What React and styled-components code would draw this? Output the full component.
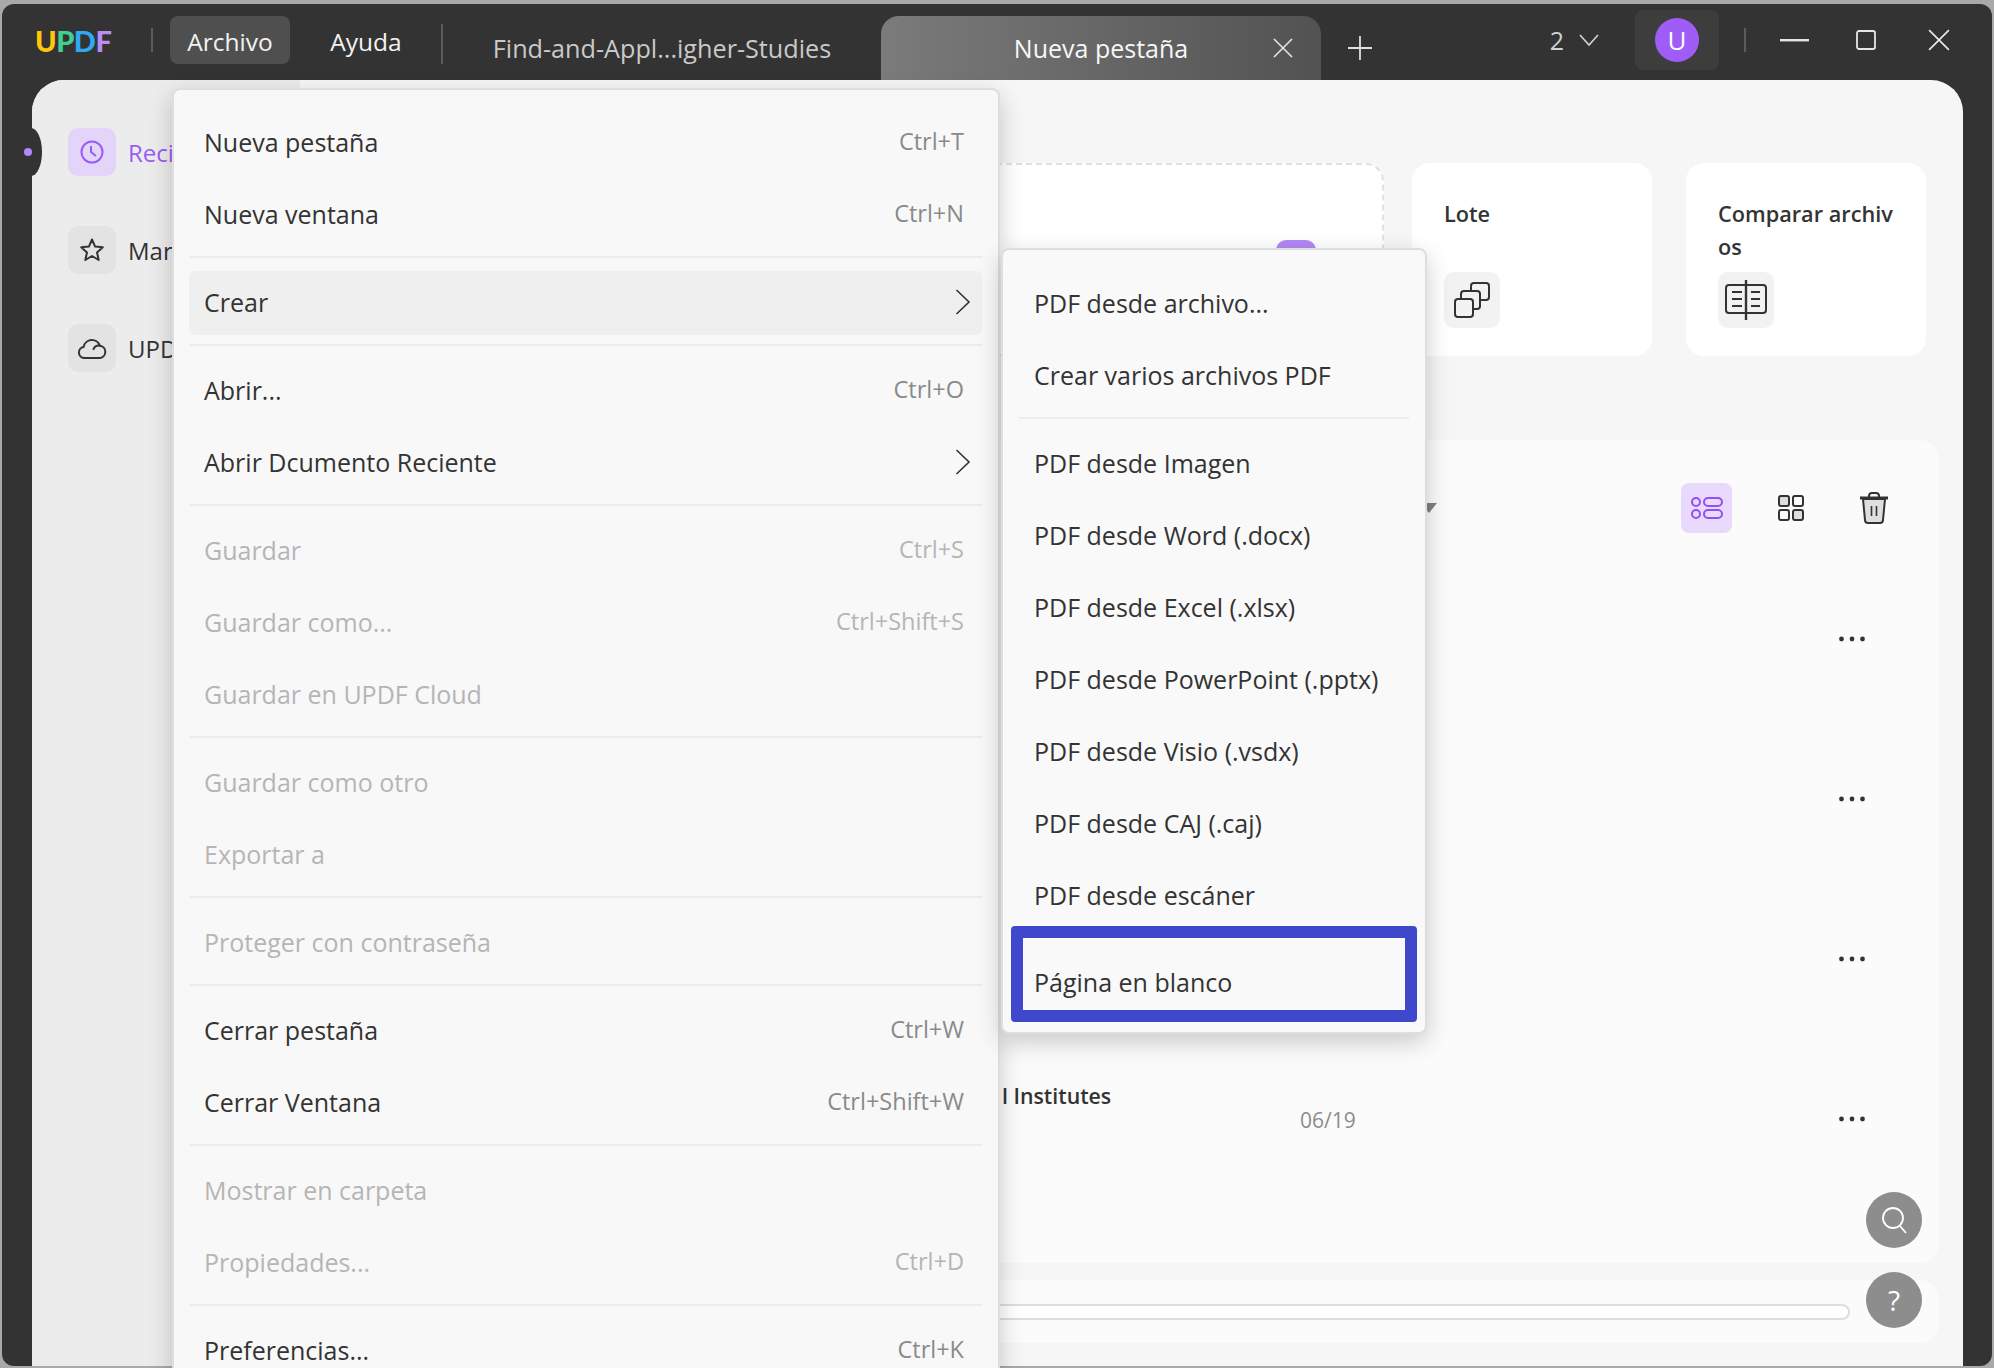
import React from "react";
import styled, { createGlobalStyle } from "styled-components";

const mainMenu = [
  [{ label: "Nueva pestaña", keys: "Ctrl+T" }, { label: "Nueva ventana", keys: "Ctrl+N" }],
  [{ label: "Crear", arrow: true, hover: true }],
  [{ label: "Abrir...", keys: "Ctrl+O" }, { label: "Abrir Dcumento Reciente", arrow: true }],
  [
    { label: "Guardar", keys: "Ctrl+S", off: true },
    { label: "Guardar como...", keys: "Ctrl+Shift+S", off: true },
    { label: "Guardar en UPDF Cloud", off: true },
  ],
  [{ label: "Guardar como otro", off: true }, { label: "Exportar a", off: true }],
  [{ label: "Proteger con contraseña", off: true }],
  [{ label: "Cerrar pestaña", keys: "Ctrl+W" }, { label: "Cerrar Ventana", keys: "Ctrl+Shift+W" }],
  [{ label: "Mostrar en carpeta", off: true }, { label: "Propiedades...", keys: "Ctrl+D", off: true }],
  [{ label: "Preferencias...", keys: "Ctrl+K" }],
];

const createItems = [
  "PDF desde Imagen",
  "PDF desde Word (.docx)",
  "PDF desde Excel (.xlsx)",
  "PDF desde PowerPoint (.pptx)",
  "PDF desde Visio (.vsdx)",
  "PDF desde CAJ (.caj)",
  "PDF desde escáner",
];

const Dots = () => (
  <svg width="28" height="6" viewBox="0 0 28 6" fill="#333">
    <circle cx="3.5" cy="3" r="2.4" />
    <circle cx="14" cy="3" r="2.4" />
    <circle cx="24.5" cy="3" r="2.4" />
  </svg>
);

const Chevron = () => (
  <svg width="16" height="26" viewBox="0 0 16 26" fill="none" stroke="#333" strokeWidth="1.6">
    <path d="M1.5 1 L14 13 L1.5 25" />
  </svg>
);

const Cross = ({ size = 20, color = "#e6e6e6" }) => (
  <svg width={size} height={size} viewBox="0 0 20 20" fill="none" stroke={color} strokeWidth="1.6">
    <path d="M1 1 L19 19 M19 1 L1 19" />
  </svg>
);

const App = () => {
  return (
    <Stage>
      <GlobalStyle />
      <Window>
        <TitleBar>
          <MenuGroup>
            <Logo>
              <LogoLetter $color="#ffc60a">U</LogoLetter>
              <LogoLetter $color="#3ed08f">P</LogoLetter>
              <LogoLetter $color="#2ea9f2">D</LogoLetter>
              <LogoLetter $color="#b98cf6">F</LogoLetter>
            </Logo>
            <BarDivider $ml={42} $h={24} />
            <MenuButton $ml={17} $active>Archivo</MenuButton>
            <MenuButton $ml={16}>Ayuda</MenuButton>
            <BarDivider $ml={15} $h={40} $mt={8} />
          </MenuGroup>
          <Tabs>
            <Tab>Find-and-Appl...igher-Studies</Tab>
            <ActiveTab>
              Nueva pestaña
              <TabClose><Cross /></TabClose>
            </ActiveTab>
            <AddTab>
              <svg width="24" height="24" viewBox="0 0 24 24" fill="none" stroke="#e0e0e0" strokeWidth="1.8">
                <path d="M12 0 V24 M0 12 H24" />
              </svg>
            </AddTab>
          </Tabs>
          <Controls>
            <PageCount>
              2
              <svg width="20" height="12" viewBox="0 0 20 12" fill="none" stroke="#d0d0d0" strokeWidth="1.7">
                <path d="M1 1 L10 11 L19 1" />
              </svg>
            </PageCount>
            <AvatarSlot><Avatar>U</Avatar></AvatarSlot>
            <BarDivider $ml={25} $h={24} />
            <WinButton $ml={34}>
              <svg width="29" height="3" viewBox="0 0 29 3"><rect width="29" height="2.4" fill="#e6e6e6" /></svg>
            </WinButton>
            <WinButton $ml={47}>
              <svg width="20" height="20" viewBox="0 0 20 20" fill="none" stroke="#e6e6e6" strokeWidth="1.8">
                <rect x="1" y="1" width="18" height="18" rx="2" />
              </svg>
            </WinButton>
            <WinButton $ml={52}><Cross size={22} /></WinButton>
          </Controls>
        </TitleBar>

        <Body>
          <Sidebar>
            <Notch />
            <SideItem $active>
              <SideTile $active>
                <svg width="26" height="26" viewBox="0 0 26 26" fill="none" stroke="#9a5cf5" strokeWidth="2">
                  <circle cx="13" cy="13" r="10.5" />
                  <path d="M12 7 V13 L17 17" />
                </svg>
              </SideTile>
              Reci
            </SideItem>
            <SideItem>
              <SideTile>
                <svg width="26" height="26" viewBox="0 0 26 26" fill="none" stroke="#333" strokeWidth="2" strokeLinejoin="round">
                  <path d="M13 2.5 L16.1 9.6 L23.8 10.3 L18 15.4 L19.7 23 L13 19 L6.3 23 L8 15.4 L2.2 10.3 L9.9 9.6 Z" />
                </svg>
              </SideTile>
              Mar
            </SideItem>
            <SideItem>
              <SideTile>
                <svg width="30" height="24" viewBox="0 0 30 24" fill="none" stroke="#333" strokeWidth="2" strokeLinecap="round">
                  <path d="M7 22 A5.6 5.6 0 0 1 6.6 10.9 A8.4 8.4 0 0 1 22.8 9.7 A6.2 6.2 0 0 1 23 22 Z" />
                  <path d="M16.5 13.2 A6 6 0 0 1 22.8 9.7" />
                </svg>
              </SideTile>
              UPD
            </SideItem>
          </Sidebar>

          <Main>
            <CardsRow>
              <DropCard><DropTile /></DropCard>
              <ToolCards>
                <ToolCard>
                  <ToolTitle>Lote</ToolTitle>
                  <ToolTile>
                    <svg width="36" height="36" viewBox="0 0 36 36" fill="none" stroke="#333" strokeWidth="2">
                      <rect x="1" y="17" width="18" height="18" rx="3" />
                      <path d="M7 17 V12 A3 3 0 0 1 10 9 H23 A3 3 0 0 1 26 12 V24 A3 3 0 0 1 23 27 H19" />
                      <path d="M17 9 V4 A3 3 0 0 1 20 1 H32 A3 3 0 0 1 35 4 V15 A3 3 0 0 1 32 18 H26" />
                    </svg>
                  </ToolTile>
                </ToolCard>
                <ToolCard>
                  <ToolTitle>Comparar archiv<br />os</ToolTitle>
                  <ToolTile>
                    <svg width="44" height="40" viewBox="0 0 44 40" fill="none" stroke="#333" strokeWidth="2">
                      <path d="M21 5 H5 A3 3 0 0 0 2 8 V30 A3 3 0 0 0 5 33 H21" />
                      <path d="M23 5 H39 A3 3 0 0 1 42 8 V30 A3 3 0 0 1 39 33 H23" />
                      <path d="M22 0 V40" strokeWidth="2.4" />
                      <path d="M8 12 H18 M8 19 H18 M8 26 H18 M27 12 H36 M27 19 H36 M27 26 H36" />
                    </svg>
                  </ToolTile>
                </ToolCard>
              </ToolCards>
            </CardsRow>

            <ListPanel>
              <Toolbar>
                <SortCaret />
                <ToolButton $active $ml={244}>
                  <svg width="32" height="22" viewBox="0 0 32 22" fill="none" stroke="#9150f5" strokeWidth="2">
                    <rect x="1" y="1" width="8" height="8" rx="4" />
                    <rect x="1" y="13" width="8" height="8" rx="4" />
                    <rect x="13" y="1" width="18" height="8" rx="4" />
                    <rect x="13" y="13" width="18" height="8" rx="4" />
                  </svg>
                </ToolButton>
                <ToolButton $ml={46}>
                  <svg width="26" height="26" viewBox="0 0 26 26" stroke="#333" strokeWidth="2">
                    <rect x="1" y="1" width="10" height="10" rx="2" fill="#dedede" />
                    <rect x="15" y="1" width="10" height="10" rx="2" fill="none" />
                    <rect x="1" y="15" width="10" height="10" rx="2" fill="none" />
                    <rect x="15" y="15" width="10" height="10" rx="2" fill="#dedede" />
                  </svg>
                </ToolButton>
                <ToolButton $ml={55}>
                  <svg width="30" height="32" viewBox="0 0 30 32" stroke="#333" strokeWidth="2" fill="none">
                    <path d="M4 7 L6 28 A3 3 0 0 0 9 31 H21 A3 3 0 0 0 24 28 L26 7 Z" fill="#dedede" />
                    <path d="M1 6 H29" strokeWidth="3" />
                    <path d="M10 6 V4 A3 3 0 0 1 13 1 H17 A3 3 0 0 1 20 4 V6" />
                    <path d="M12.5 14 V24 M17.5 14 V24" strokeWidth="1.6" />
                  </svg>
                </ToolButton>
              </Toolbar>
              <FileRow><MoreSlot><Dots /></MoreSlot></FileRow>
              <FileRow><MoreSlot><Dots /></MoreSlot></FileRow>
              <FileRow><MoreSlot><Dots /></MoreSlot></FileRow>
              <FileRow>
                <FileInfo>
                  <FileName>l Institutes</FileName>
                  <FileDate>06/19</FileDate>
                </FileInfo>
                <MoreSlot><Dots /></MoreSlot>
              </FileRow>
            </ListPanel>

            <BottomBar><StorageTrack /></BottomBar>

            <FloatButton $bottom={118}>
              <svg width="28" height="28" viewBox="0 0 28 28" fill="none" stroke="#fff" strokeWidth="1.8">
                <circle cx="13" cy="12" r="10" />
                <path d="M20 20 L26 27" />
              </svg>
            </FloatButton>
            <FloatButton $bottom={38}>?</FloatButton>
          </Main>
        </Body>
      </Window>

      <FileMenu>
        {mainMenu.map((group, i) => (
          <React.Fragment key={i}>
            {i > 0 && <MenuRule />}
            {group.map((item) => (
              <MenuRow key={item.label} $hover={item.hover} $off={item.off}>
                <span>{item.label}</span>
                {item.keys && <Keys $off={item.off}>{item.keys}</Keys>}
                {item.arrow && <ArrowSlot><Chevron /></ArrowSlot>}
              </MenuRow>
            ))}
          </React.Fragment>
        ))}
      </FileMenu>

      <CreateMenu>
        <MenuRow>PDF desde archivo...</MenuRow>
        <MenuRow>Crear varios archivos PDF</MenuRow>
        <MenuRule />
        {createItems.map((label) => (
          <MenuRow key={label}>{label}</MenuRow>
        ))}
        <BlankRow>
          Página en blanco
          <BlueFrame />
        </BlankRow>
      </CreateMenu>
    </Stage>
  );
};

export default App;

const GlobalStyle = createGlobalStyle`
  html, body {
    margin: 0;
    padding: 0;
    background: #a9a9a9;
    font-family: "Open Sans", "Noto Sans", sans-serif;
  }
  * {
    box-sizing: border-box;
  }
`;

const Stage = styled.div`
  position: relative;
  width: 1994px;
  height: 1368px;
  overflow: hidden;
  padding: 4px 2px 2px 2px;
`;

const Window = styled.div`
  display: flex;
  flex-direction: column;
  height: 100%;
  background: #333333;
  border-radius: 12px;
  overflow: hidden;
`;

const TitleBar = styled.div`
  display: flex;
  align-items: flex-start;
  height: 76px;
  flex-shrink: 0;
  padding-left: 33px;
`;

const MenuGroup = styled.div`
  display: flex;
  align-items: center;
  height: 48px;
  margin-top: 12px;
`;

const Logo = styled.div`
  display: flex;
  width: 74px;
  font-family: "Lato", sans-serif;
  font-size: 29px;
  font-weight: 900;
  line-height: 1;
  letter-spacing: -0.5px;
`;

const LogoLetter = styled.span`
  color: ${(p) => p.$color};
`;

const BarDivider = styled.div`
  width: 2px;
  height: ${(p) => p.$h}px;
  margin-left: ${(p) => p.$ml}px;
  margin-top: ${(p) => p.$mt || 0}px;
  background: #5c5c5c;
`;

const MenuButton = styled.div`
  display: flex;
  align-items: center;
  justify-content: center;
  width: 120px;
  height: 48px;
  margin-left: ${(p) => p.$ml}px;
  padding-top: 2px;
  border-radius: 8px;
  background: ${(p) => (p.$active ? "#4f4f4f" : "transparent")};
  color: #f2f2f2;
  font-size: 24.5px;
`;

const Tabs = styled.div`
  display: flex;
  align-items: center;
  height: 64px;
  margin-top: 12px;
`;

const Tab = styled.div`
  display: flex;
  align-items: center;
  justify-content: center;
  width: 438px;
  height: 100%;
  color: #c9c9c9;
  font-size: 25.2px;
`;

const ActiveTab = styled.div`
  position: relative;
  display: flex;
  align-items: center;
  justify-content: center;
  width: 440px;
  height: 100%;
  border-radius: 18px 18px 0 0;
  background: linear-gradient(90deg, #7b7b7b 0%, #525252 100%);
  color: #f7f7f7;
  font-size: 25px;
`;

const TabClose = styled.div`
  position: absolute;
  right: 28px;
  top: 22px;
  display: flex;
`;

const AddTab = styled.div`
  display: flex;
  margin-left: 27px;
`;

const Controls = styled.div`
  display: flex;
  align-items: center;
  height: 60px;
  margin-top: 6px;
  margin-left: auto;
  padding-right: 42px;
`;

const PageCount = styled.div`
  display: flex;
  align-items: center;
  gap: 15px;
  color: #d0d0d0;
  font-size: 25px;
`;

const AvatarSlot = styled.div`
  display: flex;
  align-items: center;
  justify-content: center;
  width: 84px;
  height: 60px;
  margin-left: 36px;
  border-radius: 8px;
  background: #3d3d3d;
`;

const Avatar = styled.div`
  display: flex;
  align-items: center;
  justify-content: center;
  width: 44px;
  height: 44px;
  border-radius: 50%;
  background: #a05cf7;
  color: #ffffff;
  font-size: 26px;
`;

const WinButton = styled.div`
  display: flex;
  margin-left: ${(p) => p.$ml}px;
`;

const Body = styled.div`
  display: flex;
  flex: 1;
  min-height: 0;
  margin: 0 29px 0 30px;
  border-radius: 32px 32px 0 0;
  background: #f6f6f6;
`;

const Sidebar = styled.div`
  position: relative;
  display: flex;
  flex-direction: column;
  gap: 50px;
  width: 268px;
  flex-shrink: 0;
  padding: 48px 0 0 36px;
  border-radius: 32px 0 0 0;
  background: #ececec;
`;

const Notch = styled.div`
  position: absolute;
  left: -12px;
  top: 48px;
  width: 22px;
  height: 48px;
  border-radius: 50%;
  background: #333333;

  &::after {
    content: "";
    position: absolute;
    left: 4px;
    top: 20px;
    width: 8px;
    height: 8px;
    border-radius: 50%;
    background: #b388f7;
  }
`;

const SideItem = styled.div`
  display: flex;
  align-items: center;
  gap: 12px;
  color: ${(p) => (p.$active ? "#9a5cf5" : "#333333")};
  font-size: 24px;
`;

const SideTile = styled.div`
  display: flex;
  align-items: center;
  justify-content: center;
  width: 48px;
  height: 48px;
  border-radius: 10px;
  background: ${(p) => (p.$active ? "#e3d5f9" : "#e3e3e3")};
`;

const Main = styled.div`
  position: relative;
  flex: 1;
  min-width: 0;
  padding: 83px 25px 0 28px;
`;

const CardsRow = styled.div`
  display: flex;
  gap: 28px;
  height: 193px;
  padding-right: 12px;
`;

const DropCard = styled.div`
  flex: 1;
  display: flex;
  justify-content: flex-end;
  padding: 75px 66px 0 0;
  border: 2px dashed #e2e2e2;
  border-radius: 18px;
  background: #ffffff;
`;

const DropTile = styled.div`
  width: 40px;
  height: 56px;
  border-radius: 10px;
  background: #b388f7;
`;

const ToolCards = styled.div`
  display: flex;
  gap: 34px;
`;

const ToolCard = styled.div`
  width: 240px;
  padding: 34px 0 0 32px;
  border-radius: 18px;
  background: #ffffff;
`;

const ToolTitle = styled.div`
  min-height: 66px;
  margin-bottom: 9px;
  color: #333333;
  font-size: 21.7px;
  font-weight: 600;
  line-height: 33px;
`;

const ToolTile = styled.div`
  display: flex;
  align-items: center;
  justify-content: center;
  width: 56px;
  height: 56px;
  border-radius: 10px;
  background: #f2f2f2;
`;

const ListPanel = styled.div`
  height: 823px;
  margin-top: 84px;
  padding-top: 43px;
  border-radius: 18px;
  background: #fbfbfb;
`;

const Toolbar = styled.div`
  display: flex;
  align-items: center;
  height: 50px;
  margin-bottom: 26px;
  padding-right: 49px;
`;

const SortCaret = styled.div`
  width: 0;
  height: 0;
  margin-left: 1093px;
  border-left: 8px solid transparent;
  border-right: 8px solid transparent;
  border-top: 10px solid #808080;
`;

const ToolButton = styled.div`
  display: flex;
  align-items: center;
  justify-content: center;
  height: 50px;
  padding: 0 ${(p) => (p.$active ? 9.5 : 0)}px;
  margin-left: ${(p) => p.$ml}px;
  border-radius: 8px;
  background: ${(p) => (p.$active ? "#e8d9fd" : "transparent")};
`;

const FileRow = styled.div`
  display: flex;
  align-items: center;
  height: 160px;
  padding-right: 72px;
`;

const FileInfo = styled.div`
  display: flex;
  flex-direction: column;
  margin-left: 674px;
  padding-bottom: 22px;
`;

const FileName = styled.div`
  color: #333333;
  font-size: 21.3px;
  font-weight: 600;
  line-height: 24px;
`;

const FileDate = styled.div`
  margin-left: 298px;
  color: #8c8c8c;
  font-size: 21px;
  line-height: 24px;
`;

const MoreSlot = styled.div`
  display: flex;
  margin-left: auto;
`;

const BottomBar = styled.div`
  display: flex;
  align-items: center;
  height: 63px;
  margin-top: 17px;
  padding-right: 88px;
  border-radius: 18px;
  background: #fbfbfb;
`;

const StorageTrack = styled.div`
  flex: 1;
  height: 16px;
  border: 2px solid #dddddd;
  border-radius: 8px;
  background: #ffffff;
`;

const FloatButton = styled.div`
  position: absolute;
  right: 41px;
  bottom: ${(p) => p.$bottom}px;
  display: flex;
  align-items: center;
  justify-content: center;
  width: 56px;
  height: 56px;
  border-radius: 50%;
  background: #8d8d8d;
  color: #ffffff;
  font-size: 28px;
`;

const FileMenu = styled.div`
  position: absolute;
  left: 172px;
  top: 88px;
  display: flex;
  flex-direction: column;
  width: 828px;
  height: 1300px;
  padding: 17px 16px 0 15px;
  border: 2px solid #dedede;
  border-radius: 8px;
  background: #f8f8f8;
  box-shadow: 0 8px 24px rgba(0, 0, 0, 0.2);
`;

const CreateMenu = styled.div`
  position: absolute;
  left: 1001px;
  top: 248px;
  display: flex;
  flex-direction: column;
  width: 426px;
  padding: 18px 16px 13px 16px;
  border: 2px solid #dedede;
  border-radius: 8px;
  background: #f9f9f9;
  box-shadow: 0 8px 24px rgba(0, 0, 0, 0.2);
`;

const MenuRow = styled.div`
  display: flex;
  align-items: center;
  justify-content: space-between;
  flex-shrink: 0;
  height: 64px;
  margin: 4px 0;
  padding: 0 18px 2px 15px;
  border-radius: 6px;
  background: ${(p) => (p.$hover ? "#efefef" : "transparent")};
  color: ${(p) => (p.$off ? "#b5b5b5" : "#333333")};
  font-size: 25px;
`;

const Keys = styled.span`
  color: ${(p) => (p.$off ? "#b5b5b5" : "#8a8a8a")};
  font-size: 23.5px;
  margin-top: -2px;
`;

const ArrowSlot = styled.span`
  display: flex;
  margin-right: -7px;
`;

const MenuRule = styled.div`
  flex-shrink: 0;
  height: 2px;
  margin: 5px 0 9px 0;
  background: #ececec;
`;

const BlankRow = styled(MenuRow)`
  position: relative;
  margin-top: 19px;
`;

const BlueFrame = styled.div`
  position: absolute;
  left: -8px;
  right: -8px;
  top: -25px;
  bottom: -7px;
  border: 12px solid #3f48cc;
  border-radius: 4px;
`;
